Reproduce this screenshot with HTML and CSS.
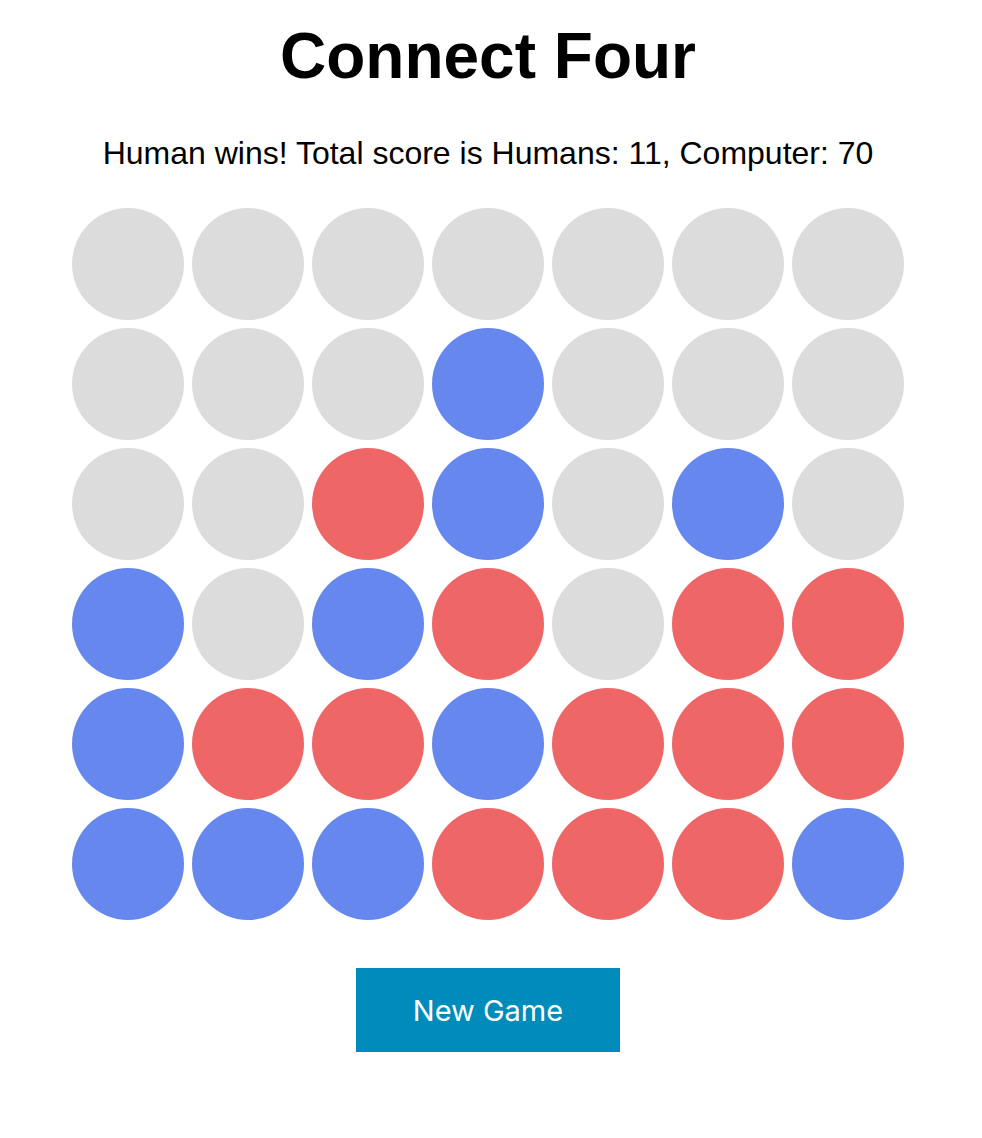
FILE: index.html
```html
<!DOCTYPE html>
<html lang="en">
  <head>
    <title>Connect Four</title>
    <meta charset="utf-8" />
    <link rel="stylesheet" href="styles.css">
  </head>
  <body>
    <div id="container">
      <h1>Connect Four</h1>
      <p id="status">Human wins! Total score is Humans: 11, Computer: 70</p>
      <div id="board">
        <div class="cell"></div><div class="cell"></div><div class="cell"></div><div class="cell"></div><div class="cell"></div><div class="cell"></div><div class="cell"></div>
        <div class="cell"></div><div class="cell"></div><div class="cell"></div><div class="cell human"></div><div class="cell"></div><div class="cell"></div><div class="cell"></div>
        <div class="cell"></div><div class="cell"></div><div class="cell computer"></div><div class="cell human"></div><div class="cell"></div><div class="cell human"></div><div class="cell"></div>
        <div class="cell human"></div><div class="cell"></div><div class="cell human"></div><div class="cell computer"></div><div class="cell"></div><div class="cell computer"></div><div class="cell computer"></div>
        <div class="cell human"></div><div class="cell computer"></div><div class="cell computer"></div><div class="cell human"></div><div class="cell computer"></div><div class="cell computer"></div><div class="cell computer"></div>
        <div class="cell human"></div><div class="cell human"></div><div class="cell human"></div><div class="cell computer"></div><div class="cell computer"></div><div class="cell computer"></div><div class="cell human"></div>
      </div>
      <button id="new-game">New Game</button>
    </div>
  </body>
</html>
```

FILE: styles.css
```css
body {
  margin: 0;
  font-family: "Liberation Sans", Arial, sans-serif;
  background: #fff;
}
#container {
  width: 976px;
  display: flex;
  flex-flow: column nowrap;
  align-items: center;
}
h1 {
  font-size: 64px;
  line-height: 74px;
  margin: 19px 0 0;
}
#status {
  font-size: 32px;
  line-height: 37px;
  margin: 42px 0 0;
}
#board {
  margin-top: 36px;
  display: grid;
  grid-template-columns: repeat(7, 112px);
  grid-auto-rows: 112px;
  gap: 8px;
}
.cell {
  border-radius: 50%;
  background-color: #dcdcdc;
}
.cell.human {
  background-color: #6688ee; /* blue */
}
.cell.computer {
  background-color: #ee6666; /* red */
}
#new-game {
  margin-top: 48px;
  width: 264px;
  height: 84px;
  border: none;
  background-color: #008cba;
  color: #fff;
  font-family: Inter, "Liberation Sans", sans-serif;
  font-size: 29px;
  padding: 0;
}
```
